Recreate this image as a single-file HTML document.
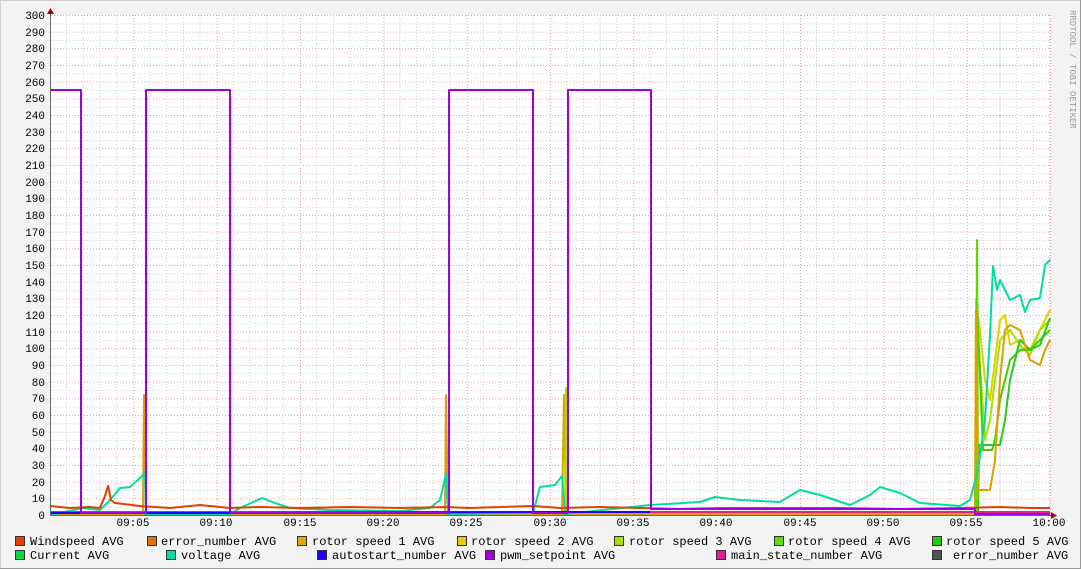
<!DOCTYPE html>
<html><head><meta charset="utf-8"><style>
body{margin:0;background:#f3f3f3;}
svg{display:block;font-family:"Liberation Mono","DejaVu Sans Mono",monospace;}
</style></head><body>
<svg width="1081" height="569" viewBox="0 0 1081 569" xmlns="http://www.w3.org/2000/svg">
<defs>
<pattern id="vg" x="50" y="0" width="83.3333" height="500" patternUnits="userSpaceOnUse">
<g stroke="#d0d0d0" stroke-dasharray="1,2">
<line x1="16.667" y1="0" x2="16.667" y2="500"/>
<line x1="33.333" y1="0" x2="33.333" y2="500"/>
<line x1="50" y1="0" x2="50" y2="500"/>
<line x1="66.667" y1="0" x2="66.667" y2="500"/>
</g>
<line x1="0.5" y1="0" x2="0.5" y2="500" stroke="#e8a0a0" stroke-dasharray="1,2"/>
</pattern>
<pattern id="hg" x="0" y="15" width="1000" height="16.6667" patternUnits="userSpaceOnUse">
<line x1="0" y1="0.5" x2="1000" y2="0.5" stroke="#e8a0a0" stroke-dasharray="1,2"/>
<line x1="0" y1="8.83" x2="1000" y2="8.83" stroke="#d0d0d0" stroke-dasharray="1,2"/>
</pattern>
</defs>
<rect x="0" y="0" width="1081" height="569" fill="#f3f3f3"/>
<rect x="0.5" y="0.5" width="1080" height="568" fill="none" stroke="#cfcfcf"/>
<line x1="0" y1="568.5" x2="1081" y2="568.5" stroke="#9a9a9a"/>
<line x1="1080.5" y1="0" x2="1080.5" y2="569" stroke="#9a9a9a"/>
<rect x="50" y="15" width="1000" height="500" fill="#fff"/>
<rect x="50" y="15" width="1000" height="500" fill="url(#hg)"/>
<rect x="51" y="15" width="1000" height="500" fill="url(#vg)"/>
<g font-size="11" fill="#000" text-anchor="end">
<text x="45" y="19">300</text><text x="45" y="36">290</text><text x="45" y="52">280</text><text x="45" y="69">270</text><text x="45" y="86">260</text><text x="45" y="102">250</text><text x="45" y="119">240</text><text x="45" y="136">230</text><text x="45" y="152">220</text><text x="45" y="169">210</text><text x="45" y="186">200</text><text x="45" y="202">190</text><text x="45" y="219">180</text><text x="45" y="236">170</text><text x="45" y="252">160</text><text x="45" y="269">150</text><text x="45" y="286">140</text><text x="45" y="302">130</text><text x="45" y="319">120</text><text x="45" y="336">110</text><text x="45" y="352">100</text><text x="45" y="369">90</text><text x="45" y="386">80</text><text x="45" y="402">70</text><text x="45" y="419">60</text><text x="45" y="436">50</text><text x="45" y="452">40</text><text x="45" y="469">30</text><text x="45" y="486">20</text><text x="45" y="502">10</text><text x="45" y="519">0</text>
</g>
<g font-size="11" fill="#000" text-anchor="middle">
<text x="133" y="526">09:05</text><text x="216" y="526">09:10</text><text x="300" y="526">09:15</text><text x="383" y="526">09:20</text><text x="466" y="526">09:25</text><text x="550" y="526">09:30</text><text x="633" y="526">09:35</text><text x="716" y="526">09:40</text><text x="800" y="526">09:45</text><text x="883" y="526">09:50</text><text x="966" y="526">09:55</text><text x="1049" y="526">10:00</text>
</g>
<g fill="none" stroke-width="2" stroke-linejoin="round">
<polyline stroke="#e0d000" points="50,514 960,514 975,514 976,300 980,330 985,380 990,400 995,360 1000,320 1005,315 1010,345 1020,340 1030,350 1040,330 1050,310"/>
<polyline stroke="#aadd00" points="50,514 975,514 977,320 985,440 990,420 995,380 1000,340 1010,330 1020,345 1030,355 1040,330 1050,320"/>
<polyline stroke="#44cc00" points="50,514 976,514 977,300 983,450 992,450 995,440 1000,400 1005,380 1010,360 1020,350 1030,350 1040,340 1050,330"/>
<polyline stroke="#22cc22" points="50,514 978,514 979,445 1000,445 1005,420 1010,380 1015,360 1020,340 1030,350 1040,345 1050,318"/>
<polyline stroke="#55dd00" points="976,514 977,240 978,500"/>
<polyline stroke="#dda000" points="50,514 143,514 144,395 146,514 445,514 446,395 448,514 562,514 564,395 566,514 975,514 976,310 978,490 990,490 995,460 1000,380 1005,330 1010,325 1020,330 1030,360 1040,365 1045,350 1050,340"/>
<polyline stroke="#aadd00" points="565,514 566,388 568,514"/>
<polyline stroke="#00dda0" points="50,515 83,508 100,510 110,500 120,488 130,487 140,478 145,473 146,514 230,514 240,508 262,498 275,503 290,508 330,510 400,511 430,508 440,500 446,474 448,514 533,513 540,487 555,485 562,476 565,514 650,505 700,502 715,497 740,500 780,502 800,490 820,495 850,505 870,495 880,487 900,493 920,503 960,506 970,500 978,470 985,420 990,335 993,266 997,290 1000,280 1010,300 1020,295 1025,312 1030,300 1040,298 1045,265 1050,260"/>
<polyline stroke="#e04000" points="50,506 70,508 90,507 100,508 105,496 108,486 111,500 115,503 140,506 170,508 200,505 230,508 260,507 300,508 350,507 400,508 445,507 470,508 500,507 533,506 560,508 600,507 640,508 680,509 720,508 780,508 840,508 900,509 960,508 1000,507 1030,508 1050,508"/>
<polyline stroke="#e02090" points="50,512 1050,512"/>
<polyline stroke="#2000ff" points="50,513 230,513 533,512 650,512"/>
<polyline stroke="#a000e0" points="50,90 81,90 81,513 146,513 146,90 230,90 230,513 449,513 449,90 533,90 533,513 568,513 568,90 651,90 651,509 975,509 975,514 1050,514"/>
</g>
<line x1="50" y1="515.5" x2="1055" y2="515.5" stroke="#666"/>
<line x1="50.5" y1="12" x2="50.5" y2="515" stroke="#666"/>
<polygon points="47,14 54,14 50.5,8" fill="#a00000"/>
<polygon points="1051,512 1051,519 1057,515.5" fill="#a00000"/>
<text transform="translate(1070,10) rotate(90)" font-size="9" fill="#999">RRDTOOL / TOBI OETIKER</text>
<g stroke="#333" stroke-width="1">
<rect x="15.5" y="536.5" width="9" height="9" fill="#e04000"/>
<rect x="147.5" y="536.5" width="9" height="9" fill="#e07000"/>
<rect x="297.5" y="536.5" width="9" height="9" fill="#e0a800"/>
<rect x="457.5" y="536.5" width="9" height="9" fill="#e0d000"/>
<rect x="614.5" y="536.5" width="9" height="9" fill="#aadd00"/>
<rect x="774.5" y="536.5" width="9" height="9" fill="#66dd00"/>
<rect x="932.5" y="536.5" width="9" height="9" fill="#22cc00"/>
<rect x="15.5" y="550.5" width="9" height="9" fill="#00dd44"/>
<rect x="166.5" y="550.5" width="9" height="9" fill="#00dda0"/>
<rect x="317.5" y="550.5" width="9" height="9" fill="#2000ff"/>
<rect x="485.5" y="550.5" width="9" height="9" fill="#a000e0"/>
<rect x="716.5" y="550.5" width="9" height="9" fill="#e02090"/>
<rect x="932.5" y="550.5" width="9" height="9" fill="#505050"/>
</g>
<g font-size="12" fill="#000">
<text x="30" y="545">Windspeed AVG</text>
<text x="161" y="545">error_number AVG</text>
<text x="312" y="545">rotor speed 1 AVG</text>
<text x="471" y="545">rotor speed 2 AVG</text>
<text x="629" y="545">rotor speed 3 AVG</text>
<text x="788" y="545">rotor speed 4 AVG</text>
<text x="946" y="545">rotor speed 5 AVG</text>
<text x="30" y="559">Current AVG</text>
<text x="181" y="559">voltage AVG</text>
<text x="332" y="559">autostart_number AVG</text>
<text x="500" y="559">pwm_setpoint AVG</text>
<text x="731" y="559">main_state_number AVG</text>
<text x="953" y="559">error_number AVG</text>
</g>
</svg>
</body></html>
